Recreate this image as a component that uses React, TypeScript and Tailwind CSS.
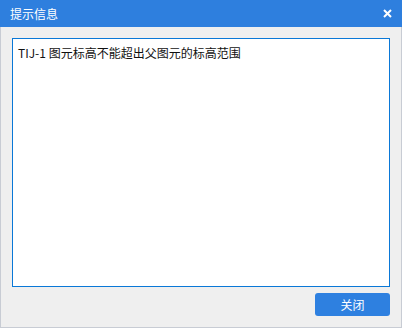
import React from 'react';

const font = { fontFamily: '"Noto Sans CJK SC", "Noto Sans", sans-serif' };

export default function App() {
  return (
    <div className="w-[402px] h-[328px] flex flex-col bg-[#efefef]" style={font}>
      <div className="h-[27px] shrink-0 bg-[#2e7fde] flex items-center justify-between pl-[10px] pr-[10px]">
        <span className="text-white text-[12px] leading-none">提示信息</span>
        <svg width="9" height="9" viewBox="0 0 9 9" className="text-white">
          <path d="M1 1 L8 8 M8 1 L1 8" stroke="currentColor" strokeWidth="2" />
        </svg>
      </div>
      <div className="flex-1 flex flex-col border-x border-b border-[#c8ccd4] pl-[11px] pr-[11px] pt-[11px] pb-[11px]">
        <div className="h-[249px] border border-[#0a78d7] bg-white px-[5px] pt-[5px]">
          <p className="text-[12px] leading-[18px] text-[#111]">TIJ-1 图元标高不能超出父图元的标高范围</p>
        </div>
        <div className="flex justify-end mt-[6px]">
          <button className="w-[75px] h-[23px] rounded-[3px] bg-[#2e80e0] text-white text-[12px] leading-none">关闭</button>
        </div>
      </div>
    </div>
  );
}
